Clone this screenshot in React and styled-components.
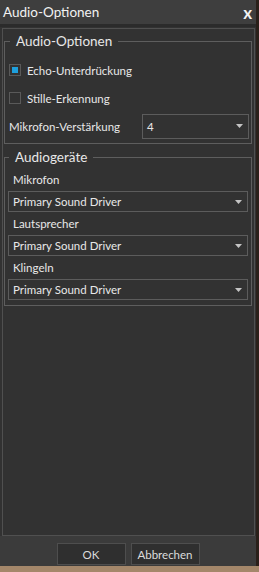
import React from "react";
import styled, { createGlobalStyle } from "styled-components";

const GlobalStyle = createGlobalStyle`
  html, body {
    margin: 0;
    height: 100%;
  }
  body {
    background: linear-gradient(to bottom, #2a201a 0, #2a201a 566px, #a4876a 566px);
    font-family: Lato, "Liberation Sans", sans-serif;
    overflow: hidden;
  }
`;

const Window = styled.div`
  width: 256px;
  height: 566px;
  display: flex;
  flex-direction: column;
  background: #323232;
  color: #e8e8e8;
`;

const TitleBar = styled.div`
  height: 24px;
  display: flex;
  align-items: center;
  justify-content: space-between;
  padding: 0 4px 0 3px;
  background: #3e3e3e;
  border-bottom: 3px solid #2b2b2b;
  color: #f2f2f2;
  font-size: 13.5px;
`;

const Close = styled.span`
  font-weight: bold;
  font-size: 17px;
  line-height: 1;
`;

const Frame = styled.div`
  flex: 1;
  margin: 1px 1px 0 2px;
  padding: 2px 2px 0 1px;
  border: 1px solid #505050;
`;

const Group = styled.fieldset`
  margin: ${(p) => (p.$first ? "0" : "3px 0 0")};
  padding: ${(p) => p.$pad};
  border: 1px solid #5e5e5e;
  min-width: 0;
`;

const Legend = styled.legend`
  margin-left: 1px;
  padding: 0 6px;
  font-size: 13.5px;
  line-height: 20px;
  color: #e8e8e8;
`;

const CheckRow = styled.div`
  height: 28px;
  display: flex;
  align-items: center;
  gap: 6px;
  font-size: 11.5px;
`;

const Box = styled.span`
  width: 12px;
  height: 12px;
  box-sizing: border-box;
  border: 1px solid #5a5a5a;
  display: flex;
  align-items: center;
  justify-content: center;
  &::after {
    content: "";
    width: 6px;
    height: 6px;
    background: ${(p) => (p.$checked ? "#1e9fdc" : "transparent")};
  }
`;

const FieldRow = styled.div`
  height: 28px;
  display: flex;
  align-items: center;
  justify-content: space-between;
  padding-right: 2px;
  font-size: 11.5px;
`;

const Select = styled.div`
  width: ${(p) => p.$width || "100%"};
  height: ${(p) => p.$height || "21px"};
  box-sizing: border-box;
  border: 1px solid #5c5c5c;
  display: flex;
  align-items: center;
  justify-content: space-between;
  padding: 0 5px 0 4px;
  font-size: 11.5px;
  color: #e8e8e8;
`;

const DeviceLabel = styled.div`
  height: 23px;
  line-height: 23px;
  padding-left: 5px;
  font-size: 11.5px;
`;

const Footer = styled.div`
  height: 30px;
  box-sizing: border-box;
  padding-top: 7px;
  display: flex;
  justify-content: center;
  gap: 5px;
  background: #3b3b3b;
`;

const Button = styled.button`
  width: 69px;
  height: 22px;
  background: #2f2f2f;
  border: 1px solid #4e4e4e;
  color: #dcdcdc;
  font-family: inherit;
  font-size: 11.5px;
  padding: 0;
`;

const Arrow = () => (
  <svg width="7" height="4" viewBox="0 0 7 4">
    <path d="M0 0 H7 L3.5 4 Z" fill="#c4c4c4" />
  </svg>
);

const Dropdown = ({ value, ...rest }) => (
  <Select {...rest}>
    <span>{value}</span>
    <Arrow />
  </Select>
);

const devices = ["Mikrofon", "Lautsprecher", "Klingeln"];

const App = () => {
  return (
    <>
      <GlobalStyle />
      <Window>
        <TitleBar>
          <span>Audio-Optionen</span>
          <Close>x</Close>
        </TitleBar>
        <Frame>
          <Group $first $pad="5px 0 3px 4px">
            <Legend>Audio-Optionen</Legend>
            <CheckRow>
              <Box $checked />
              Echo-Unterdrückung
            </CheckRow>
            <CheckRow>
              <Box />
              Stille-Erkennung
            </CheckRow>
            <FieldRow>
              <span>Mikrofon-Verstärkung</span>
              <Dropdown value="4" $width="107px" $height="25px" />
            </FieldRow>
          </Group>
          <Group $pad="1px 3px 5px 3px">
            <Legend>Audiogeräte</Legend>
            {devices.map((d) => (
              <React.Fragment key={d}>
                <DeviceLabel>{d}</DeviceLabel>
                <Dropdown value="Primary Sound Driver" />
              </React.Fragment>
            ))}
          </Group>
        </Frame>
        <Footer>
          <Button>OK</Button>
          <Button>Abbrechen</Button>
        </Footer>
      </Window>
    </>
  );
};

export default App;
